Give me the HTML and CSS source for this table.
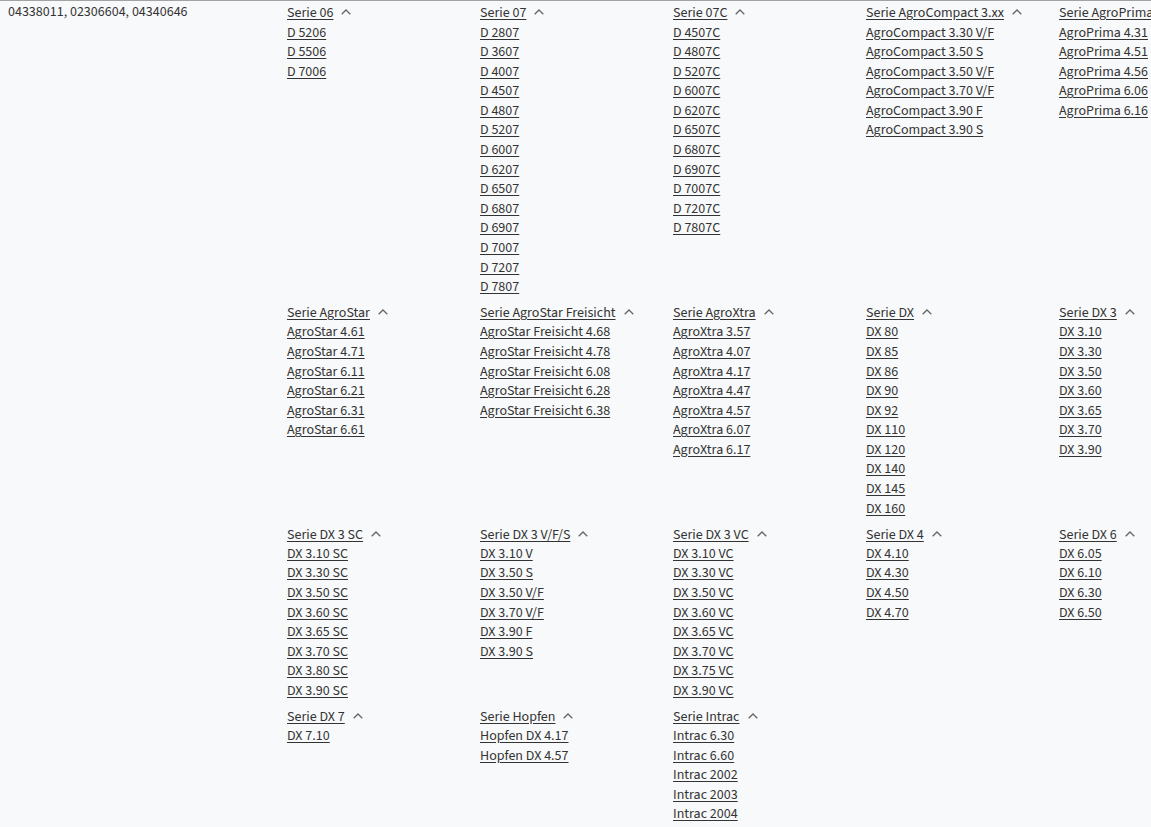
FILE: index.html
```html
<!DOCTYPE html>
<html lang="de">
<head>
<meta charset="utf-8">
<title>Serien</title>
<link rel="stylesheet" href="styles.css">
</head>
<body>
<div class="row">
  <div class="numbers">04338011, 02306604, 04340646</div>
  <div class="series-grid">
    <div class="group">
      <div class="head"><a href="#">Serie 06</a><span class="chev"><svg viewBox="0 0 10 6" width="10" height="6"><path d="M0.7 5.3 L5 1 L9.3 5.3"/></svg></span></div>
      <ul><li><a href="#">D 5206</a></li><li><a href="#">D 5506</a></li><li><a href="#">D 7006</a></li></ul>
    </div>
    <div class="group">
      <div class="head"><a href="#">Serie 07</a><span class="chev"><svg viewBox="0 0 10 6" width="10" height="6"><path d="M0.7 5.3 L5 1 L9.3 5.3"/></svg></span></div>
      <ul><li><a href="#">D 2807</a></li><li><a href="#">D 3607</a></li><li><a href="#">D 4007</a></li><li><a href="#">D 4507</a></li><li><a href="#">D 4807</a></li><li><a href="#">D 5207</a></li><li><a href="#">D 6007</a></li><li><a href="#">D 6207</a></li><li><a href="#">D 6507</a></li><li><a href="#">D 6807</a></li><li><a href="#">D 6907</a></li><li><a href="#">D 7007</a></li><li><a href="#">D 7207</a></li><li><a href="#">D 7807</a></li></ul>
    </div>
    <div class="group">
      <div class="head"><a href="#">Serie 07C</a><span class="chev"><svg viewBox="0 0 10 6" width="10" height="6"><path d="M0.7 5.3 L5 1 L9.3 5.3"/></svg></span></div>
      <ul><li><a href="#">D 4507C</a></li><li><a href="#">D 4807C</a></li><li><a href="#">D 5207C</a></li><li><a href="#">D 6007C</a></li><li><a href="#">D 6207C</a></li><li><a href="#">D 6507C</a></li><li><a href="#">D 6807C</a></li><li><a href="#">D 6907C</a></li><li><a href="#">D 7007C</a></li><li><a href="#">D 7207C</a></li><li><a href="#">D 7807C</a></li></ul>
    </div>
    <div class="group">
      <div class="head"><a href="#">Serie AgroCompact 3.xx</a><span class="chev"><svg viewBox="0 0 10 6" width="10" height="6"><path d="M0.7 5.3 L5 1 L9.3 5.3"/></svg></span></div>
      <ul><li><a href="#">AgroCompact 3.30 V/F</a></li><li><a href="#">AgroCompact 3.50 S</a></li><li><a href="#">AgroCompact 3.50 V/F</a></li><li><a href="#">AgroCompact 3.70 V/F</a></li><li><a href="#">AgroCompact 3.90 F</a></li><li><a href="#">AgroCompact 3.90 S</a></li></ul>
    </div>
    <div class="group">
      <div class="head"><a href="#">Serie AgroPrima</a><span class="chev"><svg viewBox="0 0 10 6" width="10" height="6"><path d="M0.7 5.3 L5 1 L9.3 5.3"/></svg></span></div>
      <ul><li><a href="#">AgroPrima 4.31</a></li><li><a href="#">AgroPrima 4.51</a></li><li><a href="#">AgroPrima 4.56</a></li><li><a href="#">AgroPrima 6.06</a></li><li><a href="#">AgroPrima 6.16</a></li></ul>
    </div>

    <div class="group">
      <div class="head"><a href="#">Serie AgroStar</a><span class="chev"><svg viewBox="0 0 10 6" width="10" height="6"><path d="M0.7 5.3 L5 1 L9.3 5.3"/></svg></span></div>
      <ul><li><a href="#">AgroStar 4.61</a></li><li><a href="#">AgroStar 4.71</a></li><li><a href="#">AgroStar 6.11</a></li><li><a href="#">AgroStar 6.21</a></li><li><a href="#">AgroStar 6.31</a></li><li><a href="#">AgroStar 6.61</a></li></ul>
    </div>
    <div class="group">
      <div class="head"><a href="#">Serie AgroStar Freisicht</a><span class="chev"><svg viewBox="0 0 10 6" width="10" height="6"><path d="M0.7 5.3 L5 1 L9.3 5.3"/></svg></span></div>
      <ul><li><a href="#">AgroStar Freisicht 4.68</a></li><li><a href="#">AgroStar Freisicht 4.78</a></li><li><a href="#">AgroStar Freisicht 6.08</a></li><li><a href="#">AgroStar Freisicht 6.28</a></li><li><a href="#">AgroStar Freisicht 6.38</a></li></ul>
    </div>
    <div class="group">
      <div class="head"><a href="#">Serie AgroXtra</a><span class="chev"><svg viewBox="0 0 10 6" width="10" height="6"><path d="M0.7 5.3 L5 1 L9.3 5.3"/></svg></span></div>
      <ul><li><a href="#">AgroXtra 3.57</a></li><li><a href="#">AgroXtra 4.07</a></li><li><a href="#">AgroXtra 4.17</a></li><li><a href="#">AgroXtra 4.47</a></li><li><a href="#">AgroXtra 4.57</a></li><li><a href="#">AgroXtra 6.07</a></li><li><a href="#">AgroXtra 6.17</a></li></ul>
    </div>
    <div class="group">
      <div class="head"><a href="#">Serie DX</a><span class="chev"><svg viewBox="0 0 10 6" width="10" height="6"><path d="M0.7 5.3 L5 1 L9.3 5.3"/></svg></span></div>
      <ul><li><a href="#">DX 80</a></li><li><a href="#">DX 85</a></li><li><a href="#">DX 86</a></li><li><a href="#">DX 90</a></li><li><a href="#">DX 92</a></li><li><a href="#">DX 110</a></li><li><a href="#">DX 120</a></li><li><a href="#">DX 140</a></li><li><a href="#">DX 145</a></li><li><a href="#">DX 160</a></li></ul>
    </div>
    <div class="group">
      <div class="head"><a href="#">Serie DX 3</a><span class="chev"><svg viewBox="0 0 10 6" width="10" height="6"><path d="M0.7 5.3 L5 1 L9.3 5.3"/></svg></span></div>
      <ul><li><a href="#">DX 3.10</a></li><li><a href="#">DX 3.30</a></li><li><a href="#">DX 3.50</a></li><li><a href="#">DX 3.60</a></li><li><a href="#">DX 3.65</a></li><li><a href="#">DX 3.70</a></li><li><a href="#">DX 3.90</a></li></ul>
    </div>

    <div class="group">
      <div class="head"><a href="#">Serie DX 3 SC</a><span class="chev"><svg viewBox="0 0 10 6" width="10" height="6"><path d="M0.7 5.3 L5 1 L9.3 5.3"/></svg></span></div>
      <ul><li><a href="#">DX 3.10 SC</a></li><li><a href="#">DX 3.30 SC</a></li><li><a href="#">DX 3.50 SC</a></li><li><a href="#">DX 3.60 SC</a></li><li><a href="#">DX 3.65 SC</a></li><li><a href="#">DX 3.70 SC</a></li><li><a href="#">DX 3.80 SC</a></li><li><a href="#">DX 3.90 SC</a></li></ul>
    </div>
    <div class="group">
      <div class="head"><a href="#">Serie DX 3 V/F/S</a><span class="chev"><svg viewBox="0 0 10 6" width="10" height="6"><path d="M0.7 5.3 L5 1 L9.3 5.3"/></svg></span></div>
      <ul><li><a href="#">DX 3.10 V</a></li><li><a href="#">DX 3.50 S</a></li><li><a href="#">DX 3.50 V/F</a></li><li><a href="#">DX 3.70 V/F</a></li><li><a href="#">DX 3.90 F</a></li><li><a href="#">DX 3.90 S</a></li></ul>
    </div>
    <div class="group">
      <div class="head"><a href="#">Serie DX 3 VC</a><span class="chev"><svg viewBox="0 0 10 6" width="10" height="6"><path d="M0.7 5.3 L5 1 L9.3 5.3"/></svg></span></div>
      <ul><li><a href="#">DX 3.10 VC</a></li><li><a href="#">DX 3.30 VC</a></li><li><a href="#">DX 3.50 VC</a></li><li><a href="#">DX 3.60 VC</a></li><li><a href="#">DX 3.65 VC</a></li><li><a href="#">DX 3.70 VC</a></li><li><a href="#">DX 3.75 VC</a></li><li><a href="#">DX 3.90 VC</a></li></ul>
    </div>
    <div class="group">
      <div class="head"><a href="#">Serie DX 4</a><span class="chev"><svg viewBox="0 0 10 6" width="10" height="6"><path d="M0.7 5.3 L5 1 L9.3 5.3"/></svg></span></div>
      <ul><li><a href="#">DX 4.10</a></li><li><a href="#">DX 4.30</a></li><li><a href="#">DX 4.50</a></li><li><a href="#">DX 4.70</a></li></ul>
    </div>
    <div class="group">
      <div class="head"><a href="#">Serie DX 6</a><span class="chev"><svg viewBox="0 0 10 6" width="10" height="6"><path d="M0.7 5.3 L5 1 L9.3 5.3"/></svg></span></div>
      <ul><li><a href="#">DX 6.05</a></li><li><a href="#">DX 6.10</a></li><li><a href="#">DX 6.30</a></li><li><a href="#">DX 6.50</a></li></ul>
    </div>

    <div class="group">
      <div class="head"><a href="#">Serie DX 7</a><span class="chev"><svg viewBox="0 0 10 6" width="10" height="6"><path d="M0.7 5.3 L5 1 L9.3 5.3"/></svg></span></div>
      <ul><li><a href="#">DX 7.10</a></li></ul>
    </div>
    <div class="group">
      <div class="head"><a href="#">Serie Hopfen</a><span class="chev"><svg viewBox="0 0 10 6" width="10" height="6"><path d="M0.7 5.3 L5 1 L9.3 5.3"/></svg></span></div>
      <ul><li><a href="#">Hopfen DX 4.17</a></li><li><a href="#">Hopfen DX 4.57</a></li></ul>
    </div>
    <div class="group">
      <div class="head"><a href="#">Serie Intrac</a><span class="chev"><svg viewBox="0 0 10 6" width="10" height="6"><path d="M0.7 5.3 L5 1 L9.3 5.3"/></svg></span></div>
      <ul><li><a href="#">Intrac 6.30</a></li><li><a href="#">Intrac 6.60</a></li><li><a href="#">Intrac 2002</a></li><li><a href="#">Intrac 2003</a></li><li><a href="#">Intrac 2004</a></li></ul>
    </div>
  </div>
</div>
</body>
</html>
```
FILE: styles.css
```css
html, body {
  margin: 0;
  padding: 0;
  overflow: hidden;
  background: #f8f9fa;
}
body {
  font-family: "Source Sans Pro", "Source Sans 3", Lato, sans-serif;
  font-size: 14px;
  color: #333;
}
.row {
  display: flex;
  border-top: 1px solid #a3a3a3;
  padding-top: 2px;
  width: 1300px;
}
.numbers {
  box-sizing: border-box;
  width: 287px;
  flex: none;
  padding-left: 8px;
  line-height: 19px;
}
.series-grid {
  display: grid;
  grid-template-columns: repeat(5, 193px);
  row-gap: 5px;
  align-items: start;
}
.group a {
  color: #333;
  text-decoration: underline;
  text-underline-offset: 2px;
}
.head {
  display: flex;
  align-items: center;
  height: 20.5px;
  white-space: nowrap;
}
.chev {
  display: inline-flex;
  margin-left: 8px;
  margin-top: -2px;
}
.chev svg path {
  fill: none;
  stroke: #666;
  stroke-width: 1.3;
}
.group ul {
  list-style: none;
  margin: 0;
  padding: 0;
}
.group li {
  line-height: 19.6px;
  white-space: nowrap;
}
```
